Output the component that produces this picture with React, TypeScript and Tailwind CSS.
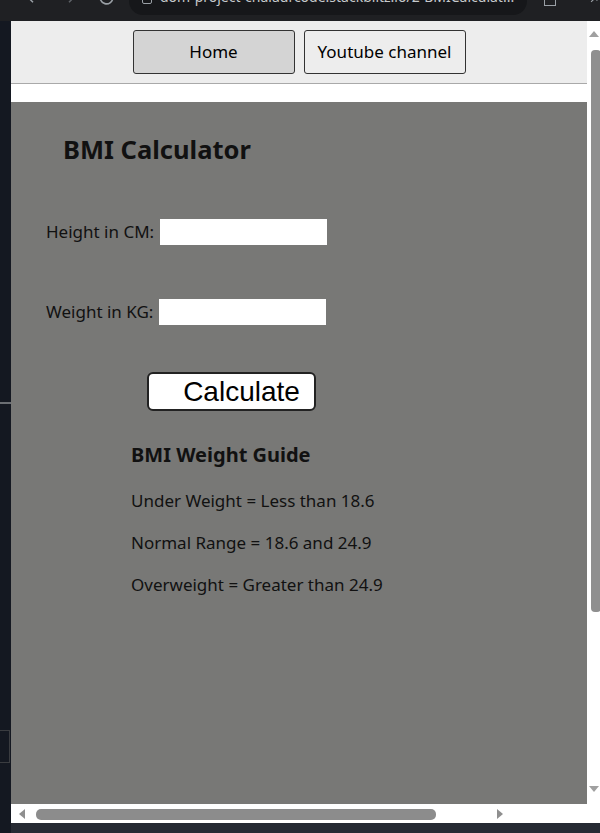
import React from "react";

export default function App() {
  const sans = { fontFamily: '"Noto Sans", "Open Sans", sans-serif' };
  return (
    <div className="relative flex h-[833px] w-[600px] flex-col overflow-hidden bg-[#1f2023]" style={sans}>
      {/* browser top bar */}
      <div className="relative h-[21px] w-full shrink-0 overflow-hidden bg-[#1f2023]">
        <svg className="absolute left-[24px] top-[-12px]" width="18" height="18" viewBox="0 0 24 24" fill="none" stroke="#9aa0a6" strokeWidth="2">
          <path d="M19 12H5M12 19l-7-7 7-7" />
        </svg>
        <svg className="absolute left-[60px] top-[-12px]" width="18" height="18" viewBox="0 0 24 24" fill="none" stroke="#5f6368" strokeWidth="2">
          <path d="M5 12h14M12 5l7 7-7 7" />
        </svg>
        <svg className="absolute left-[97px] top-[-12px]" width="19" height="19" viewBox="0 0 24 24" fill="none" stroke="#9aa0a6" strokeWidth="2">
          <path d="M20 12a8 8 0 1 1-2.3-5.6" />
        </svg>
        <div className="absolute left-[129px] top-[-20px] flex h-[35px] w-[398px] items-end overflow-hidden rounded-[14px] bg-[#16171a] pb-[9px] pl-[13px]">
          <span className="mb-[2px] mr-[8px] inline-block h-[10px] w-[10px] shrink-0 rounded-[2px] border border-[#9aa0a6]" />
          <span className="whitespace-nowrap text-[14px] leading-[18px] text-[#c6c9cc]">
            dom-project-chaiaurcode.stackblitz.io/2-BMICalculat...
          </span>
        </div>
        <div className="absolute left-[544px] top-[-6px] h-[12px] w-[12px] border border-[#9aa0a6]" />
        <svg className="absolute left-[587px] top-[-8px]" width="14" height="14" viewBox="0 0 24 24" fill="none" stroke="#9aa0a6" strokeWidth="2">
          <path d="M7 17L17 7M9 7h8v8" />
        </svg>
      </div>

      <div className="flex flex-1">
        {/* left strip */}
        <div className="relative w-[11px] shrink-0 bg-[#141821]">
          <div className="absolute left-0 top-[381px] h-[2px] w-[11px] bg-[#6b6e73]" />
          <div className="absolute left-[-2px] top-[709px] h-[33px] w-[12px] border border-[#3a3c40]" />
        </div>

        <div className="flex flex-1 flex-col">
          <div className="flex flex-1">
            {/* page */}
            <div className="flex w-[576px] flex-col">
              <div className="flex h-[63px] items-center justify-center gap-[9px] border-b border-[#a9a9a9] bg-[#ededed] pb-[1px]">
                <button className="h-[44px] w-[162px] rounded-[3px] border border-[#333] bg-[#d4d4d4] text-[17px] text-black" style={sans}>
                  Home
                </button>
                <button className="h-[44px] w-[162px] rounded-[3px] border border-[#333] bg-[#ededed] text-[17px] text-black" style={sans}>
                  Youtube channel
                </button>
              </div>
              <div className="h-[18px] bg-white" />
              <div className="flex flex-1 flex-col bg-[#787876] text-[#111]">
                <h1 className="ml-[52px] mt-[32px] text-[25.5px] font-bold leading-[30px]">BMI Calculator</h1>
                <div className="ml-[35px] mt-[55px] flex items-center text-[17px]">
                  <span>Height in CM:</span>
                  <div className="ml-[6px] h-[26px] w-[167px] bg-white" />
                </div>
                <div className="ml-[35px] mt-[54px] flex items-center text-[17px]">
                  <span>Weight in KG:</span>
                  <div className="ml-[6px] h-[26px] w-[167px] bg-white" />
                </div>
                <button
                  className="ml-[136px] mt-[47px] h-[39px] w-[169px] rounded-[6px] border-2 border-[#222] bg-white pl-[20px] text-[28px] leading-none text-black"
                  style={{ fontFamily: '"Liberation Sans", Arial, sans-serif' }}
                >
                  Calculate
                </button>
                <h2 className="ml-[120px] mt-[31px] text-[20px] font-bold leading-[26px]">BMI Weight Guide</h2>
                <p className="ml-[120px] mt-[21px] text-[17px] leading-[24px]">Under Weight = Less than 18.6</p>
                <p className="ml-[120px] mt-[18px] text-[17px] leading-[24px]">Normal Range = 18.6 and 24.9</p>
                <p className="ml-[120px] mt-[18px] text-[17px] leading-[24px]">Overweight = Greater than 24.9</p>
              </div>
            </div>
            {/* right scrollbar */}
            <div className="relative w-[13px] bg-white">
              <div className="absolute left-[2px] top-[10px] h-0 w-0 border-x-[5px] border-b-[6px] border-x-transparent border-b-[#a0a0a0]" />
              <div className="absolute left-[4px] top-[29px] h-[562px] w-[10px] rounded-[4px] bg-[#8f8f8f]" />
              <div className="absolute bottom-[12px] left-[2px] h-0 w-0 border-x-[5px] border-t-[6px] border-x-transparent border-t-[#a0a0a0]" />
            </div>
          </div>
          {/* bottom scrollbar */}
          <div className="relative h-[19px] w-full bg-white">
            <div className="absolute left-[8px] top-[5px] h-0 w-0 border-y-[5px] border-r-[6px] border-y-transparent border-r-[#8f8f8f]" />
            <div className="absolute left-[25px] top-[5px] h-[11px] w-[400px] rounded-[5px] bg-[#8c8c8c]" />
            <div className="absolute left-[486px] top-[5px] h-0 w-0 border-y-[5px] border-l-[6px] border-y-transparent border-l-[#8f8f8f]" />
          </div>
          <div className="h-[10px] w-full bg-[#262a33]" />
        </div>
      </div>
    </div>
  );
}
